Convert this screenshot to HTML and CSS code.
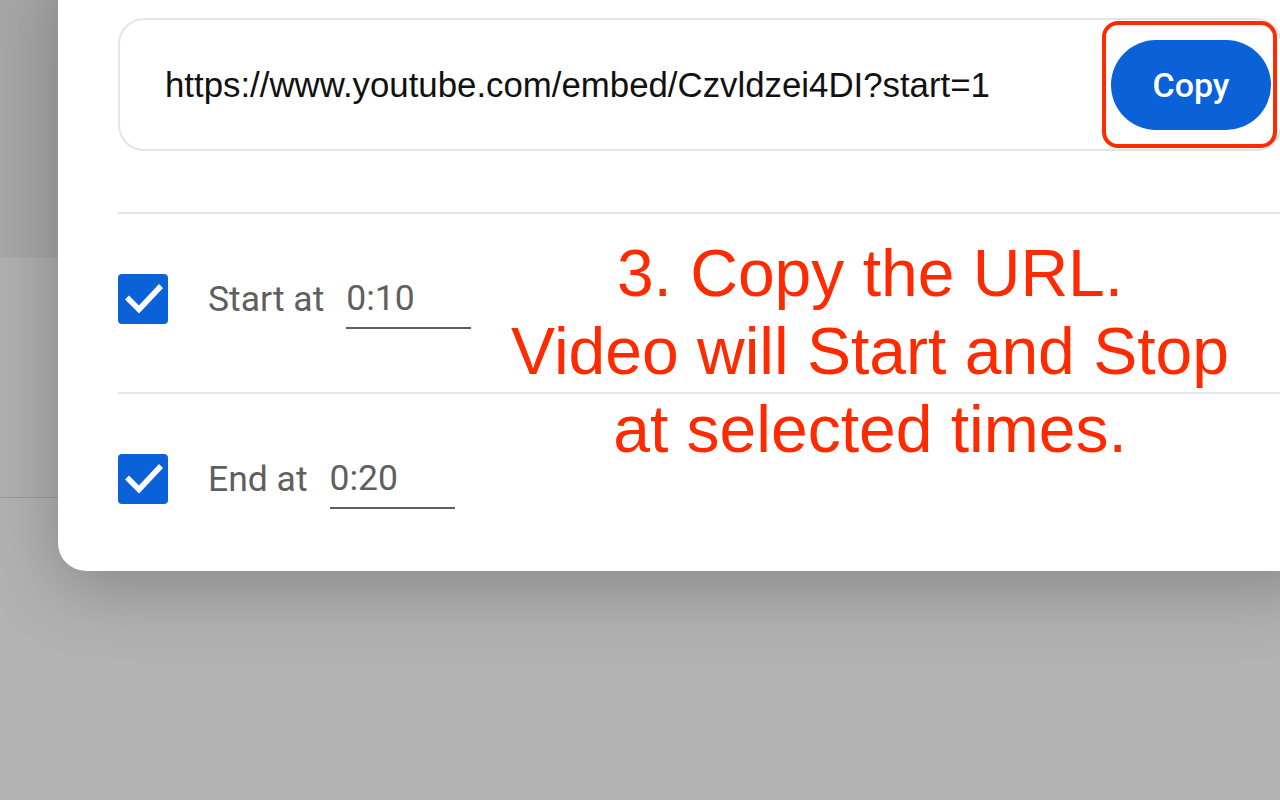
FILE: index.html
```html
<!DOCTYPE html>
<html lang="en">
<head>
<meta charset="utf-8">
<title>Embed URL</title>
<link rel="stylesheet" href="styles.css">
</head>
<body>
  <div class="page">
    <div class="page-top"></div>
    <div class="page-mid"></div>
    <div class="page-rest"></div>
  </div>

  <div class="dialog">
    <div class="url-field">
      <span class="url-text">https://www.youtube.com/embed/Czvldzei4DI?start=1</span>
      <button class="copy-btn" type="button">Copy</button>
    </div>
    <div class="options">
      <div class="option-row">
        <span class="checkbox">
          <svg viewBox="0 0 50 50" width="50" height="50"><polyline points="9,23.5 21,35.5 43,12" fill="none" stroke="#fff" stroke-width="5.5"/></svg>
        </span>
        <span class="opt-label">Start at</span>
        <span class="time-input">0:10</span>
      </div>
      <div class="option-row last">
        <span class="checkbox">
          <svg viewBox="0 0 50 50" width="50" height="50"><polyline points="9,23.5 21,35.5 43,12" fill="none" stroke="#fff" stroke-width="5.5"/></svg>
        </span>
        <span class="opt-label">End at</span>
        <span class="time-input">0:20</span>
      </div>
    </div>
  </div>

  <div class="annotation-box"></div>
  <div class="annotation-text">3. Copy the URL.<br>Video will Start and Stop<br>at selected times.</div>
</body>
</html>
```

FILE: styles.css
```css
* { box-sizing: border-box; }

html, body {
  margin: 0;
  padding: 0;
  width: 1280px;
  height: 800px;
  overflow: hidden;
}

body {
  background: #b2b2b2;
  font-family: "Roboto", "Liberation Sans", sans-serif;
  position: relative;
}

.page {
  display: flex;
  flex-direction: column;
  height: 800px;
}

.page-top {
  height: 258px;
  background: #a7a7a7;
}

.page-mid {
  height: 240px;
  background: #b0b0b0;
  border-bottom: 1px solid #9c9c9c;
}

.page-rest {
  flex: 1;
  background: #b2b2b2;
}

/* modal dialog */
.dialog {
  position: absolute;
  left: 58px;
  top: -40px;
  right: -40px;
  background: #fff;
  border-radius: 28px;
  padding: 58px 38px 0 60px;
  box-shadow: 0 14px 70px rgba(0, 0, 0, 0.26);
}

.url-field {
  display: flex;
  align-items: center;
  justify-content: space-between;
  height: 133px;
  border: 2px solid #e4e4e4;
  border-radius: 26px;
  padding: 0 9px 0 45px;
}

.url-text {
  font-family: "Liberation Sans", Arial, sans-serif;
  font-size: 34.8px;
  color: #111;
  white-space: nowrap;
}

.copy-btn {
  width: 160px;
  height: 90px;
  border: none;
  border-radius: 45px;
  background: #0a61d8;
  color: #fff;
  font-family: "Roboto", sans-serif;
  font-weight: 500;
  font-size: 34px;
  padding: 0;
  cursor: pointer;
}

.options {
  margin-top: 61px;
  border-top: 2px solid #e6e6e6;
}

.option-row {
  display: flex;
  align-items: center;
  height: 60px;
  box-sizing: content-box;
  padding: 55px 0 63px;
  border-bottom: 2px solid #e6e6e6;
}

.option-row.last {
  border-bottom: none;
  padding-bottom: 62px;
}

.checkbox {
  width: 50px;
  height: 50px;
  border-radius: 4px;
  background: #0a61d8;
  display: flex;
  flex: none;
}

.checkbox svg { display: block; }

.opt-label {
  margin-left: 40px;
  font-size: 35.5px;
  line-height: 41px;
  color: #5f5f5f;
}

.time-input {
  margin-left: 22px;
  width: 125px;
  padding: 8px 0 8px;
  font-size: 35.5px;
  line-height: 41px;
  color: #5f5f5f;
  border-bottom: 2px solid #5f5f5f;
}

/* annotation overlay */
.annotation-box {
  position: absolute;
  left: 1102px;
  top: 21px;
  width: 175px;
  height: 127px;
  border: 4px solid #ff2a00;
  border-radius: 16px;
}

.annotation-text {
  position: absolute;
  left: 470px;
  top: 234px;
  width: 800px;
  text-align: center;
  font-family: "Liberation Sans", Arial, sans-serif;
  font-size: 66px;
  line-height: 78px;
  color: #ff2a00;
}
```
